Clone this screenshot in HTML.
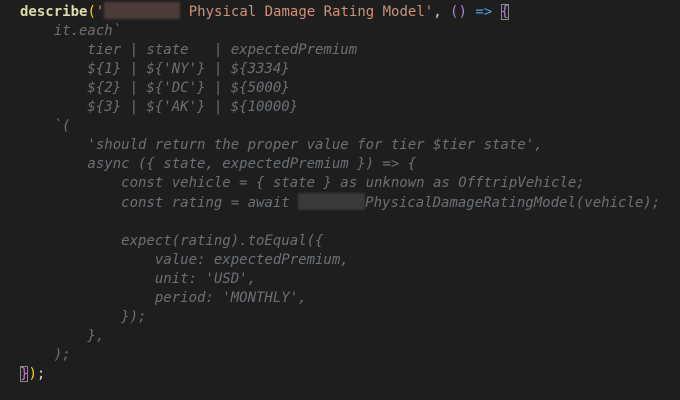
<!DOCTYPE html>
<html><head><style>
body{margin:0;background:#1e1e1e;width:680px;height:400px;overflow:hidden}
pre{margin:0;position:absolute;left:20px;top:2px;font-family:"DejaVu Sans Mono","Liberation Mono",monospace;font-size:14px;line-height:19px;color:#6b7075;font-style:italic}
.l1{font-style:normal}
.fn{color:#dcdcaa;font-weight:bold}.s{color:#ce9178}.y{color:#ffd700}.p{color:#b180d7}.b{color:#569cd6}.w{color:#d4d4d4}
.bl{display:inline-block;height:17px;vertical-align:-3px;background:#4b3c3a;filter:blur(1px)}
.bg{display:inline-block;height:17px;vertical-align:-3px;background:#3a3a3a;filter:blur(1px)}
.box{outline:1px solid #8a8a8a;outline-offset:-1px}
</style></head><body><pre><span class="l1"><span class="fn">describe</span><span class="y">(</span><span class="s">'<span class="bl" style="width:76px"></span> Physical Damage Rating Model'</span><span class="w">, </span><span class="p">()</span> <span class="b">=&gt;</span> <span class="p box">{</span></span>
    it.each`
        tier | state   | expectedPremium
        ${1} | ${'NY'} | ${3334}
        ${2} | ${'DC'} | ${5000}
        ${3} | ${'AK'} | ${10000}
    `(
        'should return the proper value for tier $tier state',
        async ({ state, expectedPremium }) =&gt; {
            const vehicle = { state } as unknown as OfftripVehicle;
            const rating = await <span class="bg" style="width:67px"></span>PhysicalDamageRatingModel(vehicle);

            expect(rating).toEqual({
                value: expectedPremium,
                unit: 'USD',
                period: 'MONTHLY',
            });
        },
    );
<span class="l1"><span class="box" style="color:#da70d6">}</span><span class="y">)</span><span class="w">;</span></span></pre></body></html>
